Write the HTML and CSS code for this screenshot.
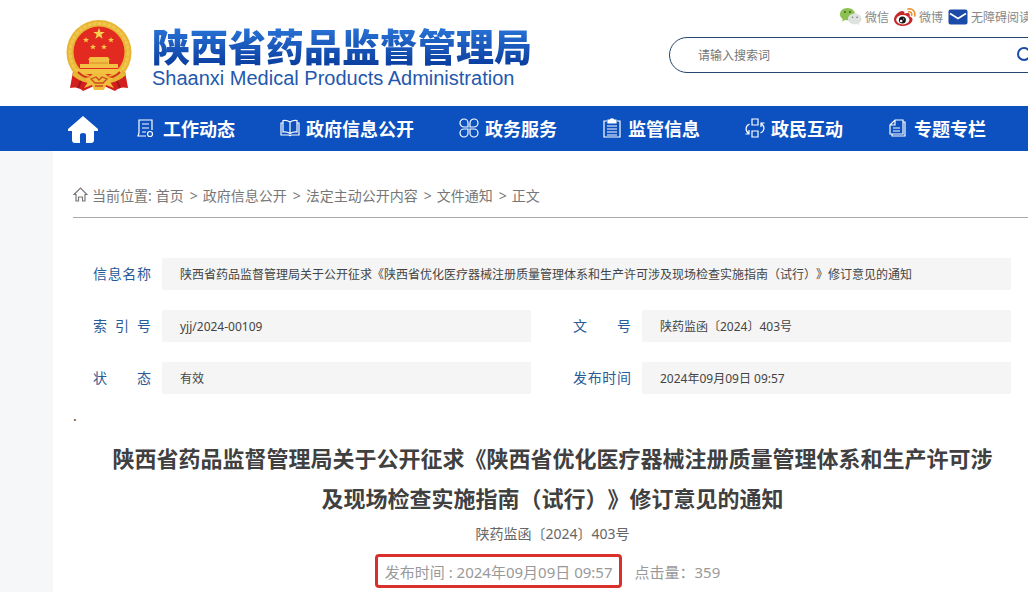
FILE: index.html
```html
<!DOCTYPE html>
<html lang="zh-CN">
<head>
  <meta charset="UTF-8">
  <meta name="viewport" content="width=device-width, initial-scale=1">
  <title>陕西省药品监督管理局</title>
  <link rel="stylesheet" href="styles.css">
</head>

<body>

<header class="header">
  <a href="#" class="logo">
    <svg class="logo__emblem" viewBox="0 0 66 72" aria-hidden="true">
      <path d="M8 46L4 68Q12 66 17 71L28 66H38L49 71Q54 66 62 68L58 46Z" fill="#d3201f"/>
      <circle cx="33" cy="32.500" r="32.500" fill="#e9b534"/>
      <circle cx="33" cy="32.500" r="29" fill="none" stroke="#f0c64f" stroke-width="3" stroke-dasharray="4 1"/>
      <circle cx="33" cy="32" r="25.500" fill="#e32a20"/>
      <path d="M33 8l1.500 4h4.200l-3.400 2.600 1.300 4.200-3.600-2.500-3.600 2.500 1.300-4.200L27.300 12h4.200z" fill="#f8d34f"/>
      <g fill="#f5c945">
        <path id="star" d="M20 17l.8 2h2.200l-1.700 1.400.6 2.200-1.900-1.300-1.900 1.300.6-2.200L17 19h2.200z"/>
        <use href="#star" x="25"/>
        <use href="#star" x="7" y="7"/>
        <use href="#star" x="18" y="7"/>
      </g>
      <path d="M24 37h18l2 3H22zM23 40h20v4H23zM14 44h38v4H14zM10 49h46l-4 5H14z" fill="#f3c141"/>
      <path d="M24 43h18" stroke="#dd8a2c"/>
      <path d="M9 50Q20 61 33 58Q46 61 57 50L60 55Q49 65 37 62L33 66L29 62Q17 65 6 55Z" fill="#e9b534"/>
      <path d="M12 52Q20 60 29 57M54 52Q46 60 37 57" fill="none" stroke="#d3301f" stroke-width="2"/>
      <path d="M24 57q3-5 9-4 6-1 9 4l5 1-3 4 4 6-8-3-2 5H28l-2-5-8 3 4-6-3-4z" fill="#f0bd3d"/>
      <path d="M25 59l5-2 3 3 3-3 5 2-4 4h-8zM29 66h8" fill="none" stroke="#cb4a1f" stroke-width="1.300"/>
      <path d="M15 61l-3 7M51 61l3 7" stroke="#9f1718" stroke-width="2"/>
    </svg>
    <span class="logo__text">
      <span class="logo__name">陕西省药品监督管理局</span>
      <span class="logo__en" lang="en">Shaanxi Medical Products Administration</span>
    </span>
  </a>

  <div class="tools">
    <nav class="links" aria-label="快捷链接">
      <a href="#" class="links__item">
        <svg width="22" height="18" viewBox="0 0 22 18" aria-hidden="true">
          <path d="M7.500 0C3.200 0 0 2.800 0 6.200c0 2 1 3.700 2.800 4.800L2 13.500l3-1.500c.8.200 1.600.3 2.500.3 4.300 0 7.500-2.700 7.500-6.100S11.800 0 7.500 0z" fill="#8cc152"/>
          <path d="M14.800 5.500c-3.800 0-6.800 2.400-6.800 5.400s3 5.400 6.800 5.400c.8 0 1.500-.1 2.200-.3l2.400 1.300-.6-2.200c1.700-1 2.700-2.500 2.700-4.200 0-3-3-5.400-6.700-5.400z" fill="#dfe3df"/>
          <g fill="#3d5f2a"><circle cx="5" cy="4" r="1"/><circle cx="10" cy="4" r="1"/></g>
          <g fill="#777"><circle cx="12.500" cy="9.300" r=".8"/><circle cx="17" cy="9.300" r=".8"/></g>
        </svg>
        微信
      </a>
      <a href="#" class="links__item">
        <svg width="22" height="18" viewBox="0 0 22 18" aria-hidden="true">
          <path d="M8 3C5 3 0 7.500 0 11.500S4 18 9 18s9.500-3 9.500-6.500c0-2-1.500-2.700-3-3.100.7-1.700.4-3.200-1.300-3.400-1.200-.2-2.700.3-3.700.8C10.800 4.200 10 3 8 3z" fill="#c5282c"/>
          <ellipse cx="8.800" cy="11.800" rx="6.600" ry="4.700" fill="#fff"/>
          <circle cx="8.400" cy="12" r="3.500" fill="#151515"/>
          <circle cx="7.200" cy="13" r="1.300" fill="#fff"/>
          <circle cx="9.600" cy="11" r=".6" fill="#fff"/>
          <path d="M14.500 3.800c2.300-.3 3.600 1.200 3.200 3.400M14 1c4.500-.8 7.700 2.500 6.700 7" fill="none" stroke="#e9943a" stroke-width="1.700" stroke-linecap="round"/>
        </svg>
        微博
      </a>
      <a href="#" class="links__item">
        <svg width="20" height="16" viewBox="0 0 20 16" aria-hidden="true">
          <rect x=".5" y=".5" width="19" height="15" rx="2" fill="#1b4ba8"/>
          <path d="M2 4.500l8 5 8-5" fill="none" stroke="#fff" stroke-width="1.700"/>
        </svg>
        无障碍阅读
      </a>
    </nav>
    <form class="search">
      <input class="search__input" type="text" placeholder="请输入搜索词" aria-label="请输入搜索词">
      <button class="search__button" type="button" aria-label="搜索">
        <svg width="16" height="16" viewBox="0 0 16 16" fill="none" stroke="#1b4ba8" stroke-width="2">
          <circle cx="7" cy="7" r="6"/><path d="M11 11l4 4"/>
        </svg>
      </button>
    </form>
  </div>
</header>

<nav class="nav" aria-label="主导航">
  <a href="#" class="nav__home" aria-label="首页">
    <svg width="30" height="27" viewBox="0 0 30 27">
      <path d="M15 0L0 13q-1 2 1 2h3v9q0 3 3 3h5v-8q0-2 3-2t3 2v8h5q3 0 3-3v-9h3q2 0 1-2z" fill="#fff"/>
    </svg>
  </a>
  <a href="#" class="nav__item">
    <svg class="nav__icon" viewBox="0 0 20 20" aria-hidden="true">
      <path d="M9 18H1l1-3V2h13v10M5 6h7M5 10h7M5 14h4"/><circle cx="13" cy="16" r="2.500"/>
    </svg>
    工作动态
  </a>
  <a href="#" class="nav__item">
    <svg class="nav__icon" viewBox="0 0 20 20" aria-hidden="true">
      <path d="M10 4Q7 2 3 2.500V14q4-.5 7 1.500 3-2 7-1.500V2.500Q13 2 10 4zM10 4v11M3 5H1v12h8l1 .8 1-.8h8V5h-2"/>
    </svg>
    政府信息公开
  </a>
  <a href="#" class="nav__item">
    <svg class="nav__icon" viewBox="0 0 20 20" aria-hidden="true">
      <path d="M9 9H5a4 4 0 1 1 4-4zM11 9V5a4 4 0 1 1 4 4zM9 11v4a4 4 0 1 1-4-4zM11 11h4a4 4 0 1 1-4 4z"/>
    </svg>
    政务服务
  </a>
  <a href="#" class="nav__item">
    <svg class="nav__icon" viewBox="0 0 20 20" aria-hidden="true">
      <path d="M5 3H2v16h16V3h-3M5 8h10M5 11h10M5 14h10M5 17h10"/>
      <path d="M6 2h2q2-2 4 0h2v3H6z" fill="#fff"/>
    </svg>
    监管信息
  </a>
  <a href="#" class="nav__item">
    <svg class="nav__icon" viewBox="0 0 20 20" aria-hidden="true">
      <path d="M7 1h6v6H7zM7 13h6v6H7zM4.500 6C0 8 0 13 4 15.500M4 12v4H.5M15.500 15C20 13 20 8 16 5.500M16 9V5h3.500"/>
    </svg>
    政民互动
  </a>
  <a href="#" class="nav__item">
    <svg class="nav__icon" viewBox="0 0 20 20" aria-hidden="true">
      <path d="M7 2h8v14H2V7zM7 2v5H2M5 10h7M5 13h7M15 4h2v14H4v-2"/>
    </svg>
    专题专栏
  </a>
</nav>

<main class="content">

  <nav class="crumbs" aria-label="当前位置">
    <svg class="crumbs__icon" width="15" height="15" viewBox="0 0 15 15" aria-hidden="true">
      <path d="M1 7.500L7.500 1 14 7.500h-2V14H9.500v-4h-4v4H3V7.500z"/>
    </svg>
    <span class="crumbs__label">当前位置:</span>
    <ol class="crumbs__list">
      <li><a href="#">首页</a></li>
      <li><a href="#">政府信息公开</a></li>
      <li><a href="#">法定主动公开内容</a></li>
      <li><a href="#">文件通知</a></li>
      <li>正文</li>
    </ol>
  </nav>

  <dl class="info">
    <div class="info__row info__row--wide">
      <dt>信息名称</dt>
      <dd>陕西省药品监督管理局关于公开征求《陕西省优化医疗器械注册质量管理体系和生产许可涉及现场检查实施指南（试行）》修订意见的通知</dd>
    </div>
    <div class="info__row">
      <dt>索引号</dt>
      <dd>yjj/2024-00109</dd>
    </div>
    <div class="info__row">
      <dt>文号</dt>
      <dd>陕药监函〔2024〕403号</dd>
    </div>
    <div class="info__row">
      <dt>状态</dt>
      <dd>有效</dd>
    </div>
    <div class="info__row">
      <dt>发布时间</dt>
      <dd>2024年09月09日 09:57</dd>
    </div>
  </dl>

  <p class="dot">.</p>

  <article class="article">
    <h1 class="article__title">陕西省药品监督管理局关于公开征求《陕西省优化医疗器械注册质量管理体系和生产许可涉及现场检查实施指南（试行）》修订意见的通知</h1>
    <p class="article__number">陕药监函〔2024〕403号</p>
    <div class="article__meta">
      <span class="article__date">发布时间 : 2024年09月09日 09:57</span>
      <span>点击量：359</span>
    </div>
  </article>

</main>

</body>
</html>
```
FILE: styles.css
```css
* { box-sizing: border-box; }

body {
  margin: 0;
  overflow-x: hidden;
  font-family: "Noto Sans", "Noto Sans CJK SC", sans-serif;
  font-size: 14px;
  text-spacing-trim: space-all;
  color: #444;
  background-color: #f6f7f9;
}

a {
  color: inherit;
  text-decoration: none;
}


/* Header */

.header {
  display: flex;
  justify-content: space-between;
  height: 106px;
  padding-left: 66px;
  overflow: hidden;
  background-color: #fff;
}

.logo {
  display: flex;
  align-items: flex-start;
  gap: 20px;
  padding-top: 20px;
}

.logo__emblem {
  width: 66px;
  height: 72px;
}

.logo__text {
  display: flex;
  flex-direction: column;
  padding-top: 4px;
  white-space: nowrap;
}

.logo__name {
  font-family: "Noto Sans CJK SC", sans-serif;
  font-size: 38px;
  font-weight: 900;
  line-height: 42px;
  color: transparent;
  background: linear-gradient(#2c78dc, #0a3d9e);
  -webkit-background-clip: text;
  background-clip: text;
}

.logo__en {
  font-family: "Liberation Sans", Arial, sans-serif;
  font-size: 20px;
  line-height: 24px;
  color: #2358ad;
}

.tools {
  flex: none;
  width: 359px;
}

.links {
  display: flex;
  justify-content: flex-end;
  gap: 5px;
  height: 37px;
  margin-right: -3px;
  padding-top: 2px;
}

.links__item {
  display: flex;
  align-items: center;
  gap: 3px;
  height: 30px;
  font-size: 12px;
  white-space: nowrap;
  color: #888;
}

.search {
  display: flex;
  height: 36px;
  margin-right: -40px;
  border: 1px solid #24466f;
  border-radius: 18px;
}

.search__input {
  flex: 1;
  padding: 0 28px;
  font: inherit;
  font-size: 12px;
  background: none;
  border: 0;
}
.search__input::placeholder { color: #757575; }

.search__button {
  display: flex;
  align-items: center;
  width: 50px;
  padding: 0;
  background: none;
  border: 0;
}


/* Main navigation */

.nav {
  display: flex;
  align-items: center;
  gap: 45px;
  height: 45px;
  padding: 0 0 2px 68px;
  background-color: #0c51bf;
}

.nav__home {
  display: flex;
  margin-right: -6px;
  padding-top: 4px;
}

.nav__item {
  display: flex;
  flex: none;
  align-items: center;
  gap: 6px;
  font-size: 18px;
  font-weight: bold;
  color: #fff;
}

.nav__icon {
  width: 20px;
  height: 20px;
  fill: none;
  stroke: #fff;
  stroke-width: 1.2;
}


/* Content */

.content {
  margin-left: 53px;
  padding: 27px 0 4px 20px;
  background-color: #fff;
}

.crumbs {
  display: flex;
  align-items: center;
  height: 40px;
  padding-bottom: 6px;
  color: #777;
  border-bottom: 1px solid #aaa;
}

.crumbs__icon {
  fill: none;
  stroke: #777;
  stroke-width: 1.2;
}

.crumbs__label { margin: 0 4px; }

.crumbs__list {
  display: flex;
  margin: 0;
  padding: 0;
  list-style: none;
}
.crumbs__list li + li::before {
  content: ">";
  margin: 0 5px 0 6px;
}

.info {
  display: grid;
  grid-template-columns: 1fr 1fr;
  gap: 20px 42px;
  margin: 40px 17px 0 20px;
}

.info__row {
  display: flex;
  gap: 11px;
  line-height: 32px;
}
.info__row--wide { grid-column: span 2; }

.info dt {
  flex: none;
  width: 58px;
  text-align-last: justify;
  color: #285a98;
}

.info dd {
  flex: 1;
  height: 32px;
  margin: 0;
  padding-left: 18px;
  font-size: 12px;
  line-height: 34px;
  background-color: #f5f5f5;
}

.dot {
  margin: 12px 0 0;
  line-height: 20px;
}


/* Article */

.article {
  padding: 12px 34px 0 38px;
  text-align: center;
}

.article__title {
  margin: 0;
  font-size: 22px;
  line-height: 40px;
  color: #404040;
}

.article__number {
  margin: 6px 0 0;
  line-height: 20px;
  color: #666;
}

.article__meta {
  display: flex;
  justify-content: center;
  align-items: center;
  gap: 12px;
  margin-top: 10px;
  font-size: 15px;
  color: #999;
}

/* Pulled left so the text, not the frame, is centred */
.article__date {
  margin-left: -10px;
  padding: 2px 7px 0;
  line-height: 26px;
  border: 3px solid #d9302c;
  border-radius: 4px;
}
```
